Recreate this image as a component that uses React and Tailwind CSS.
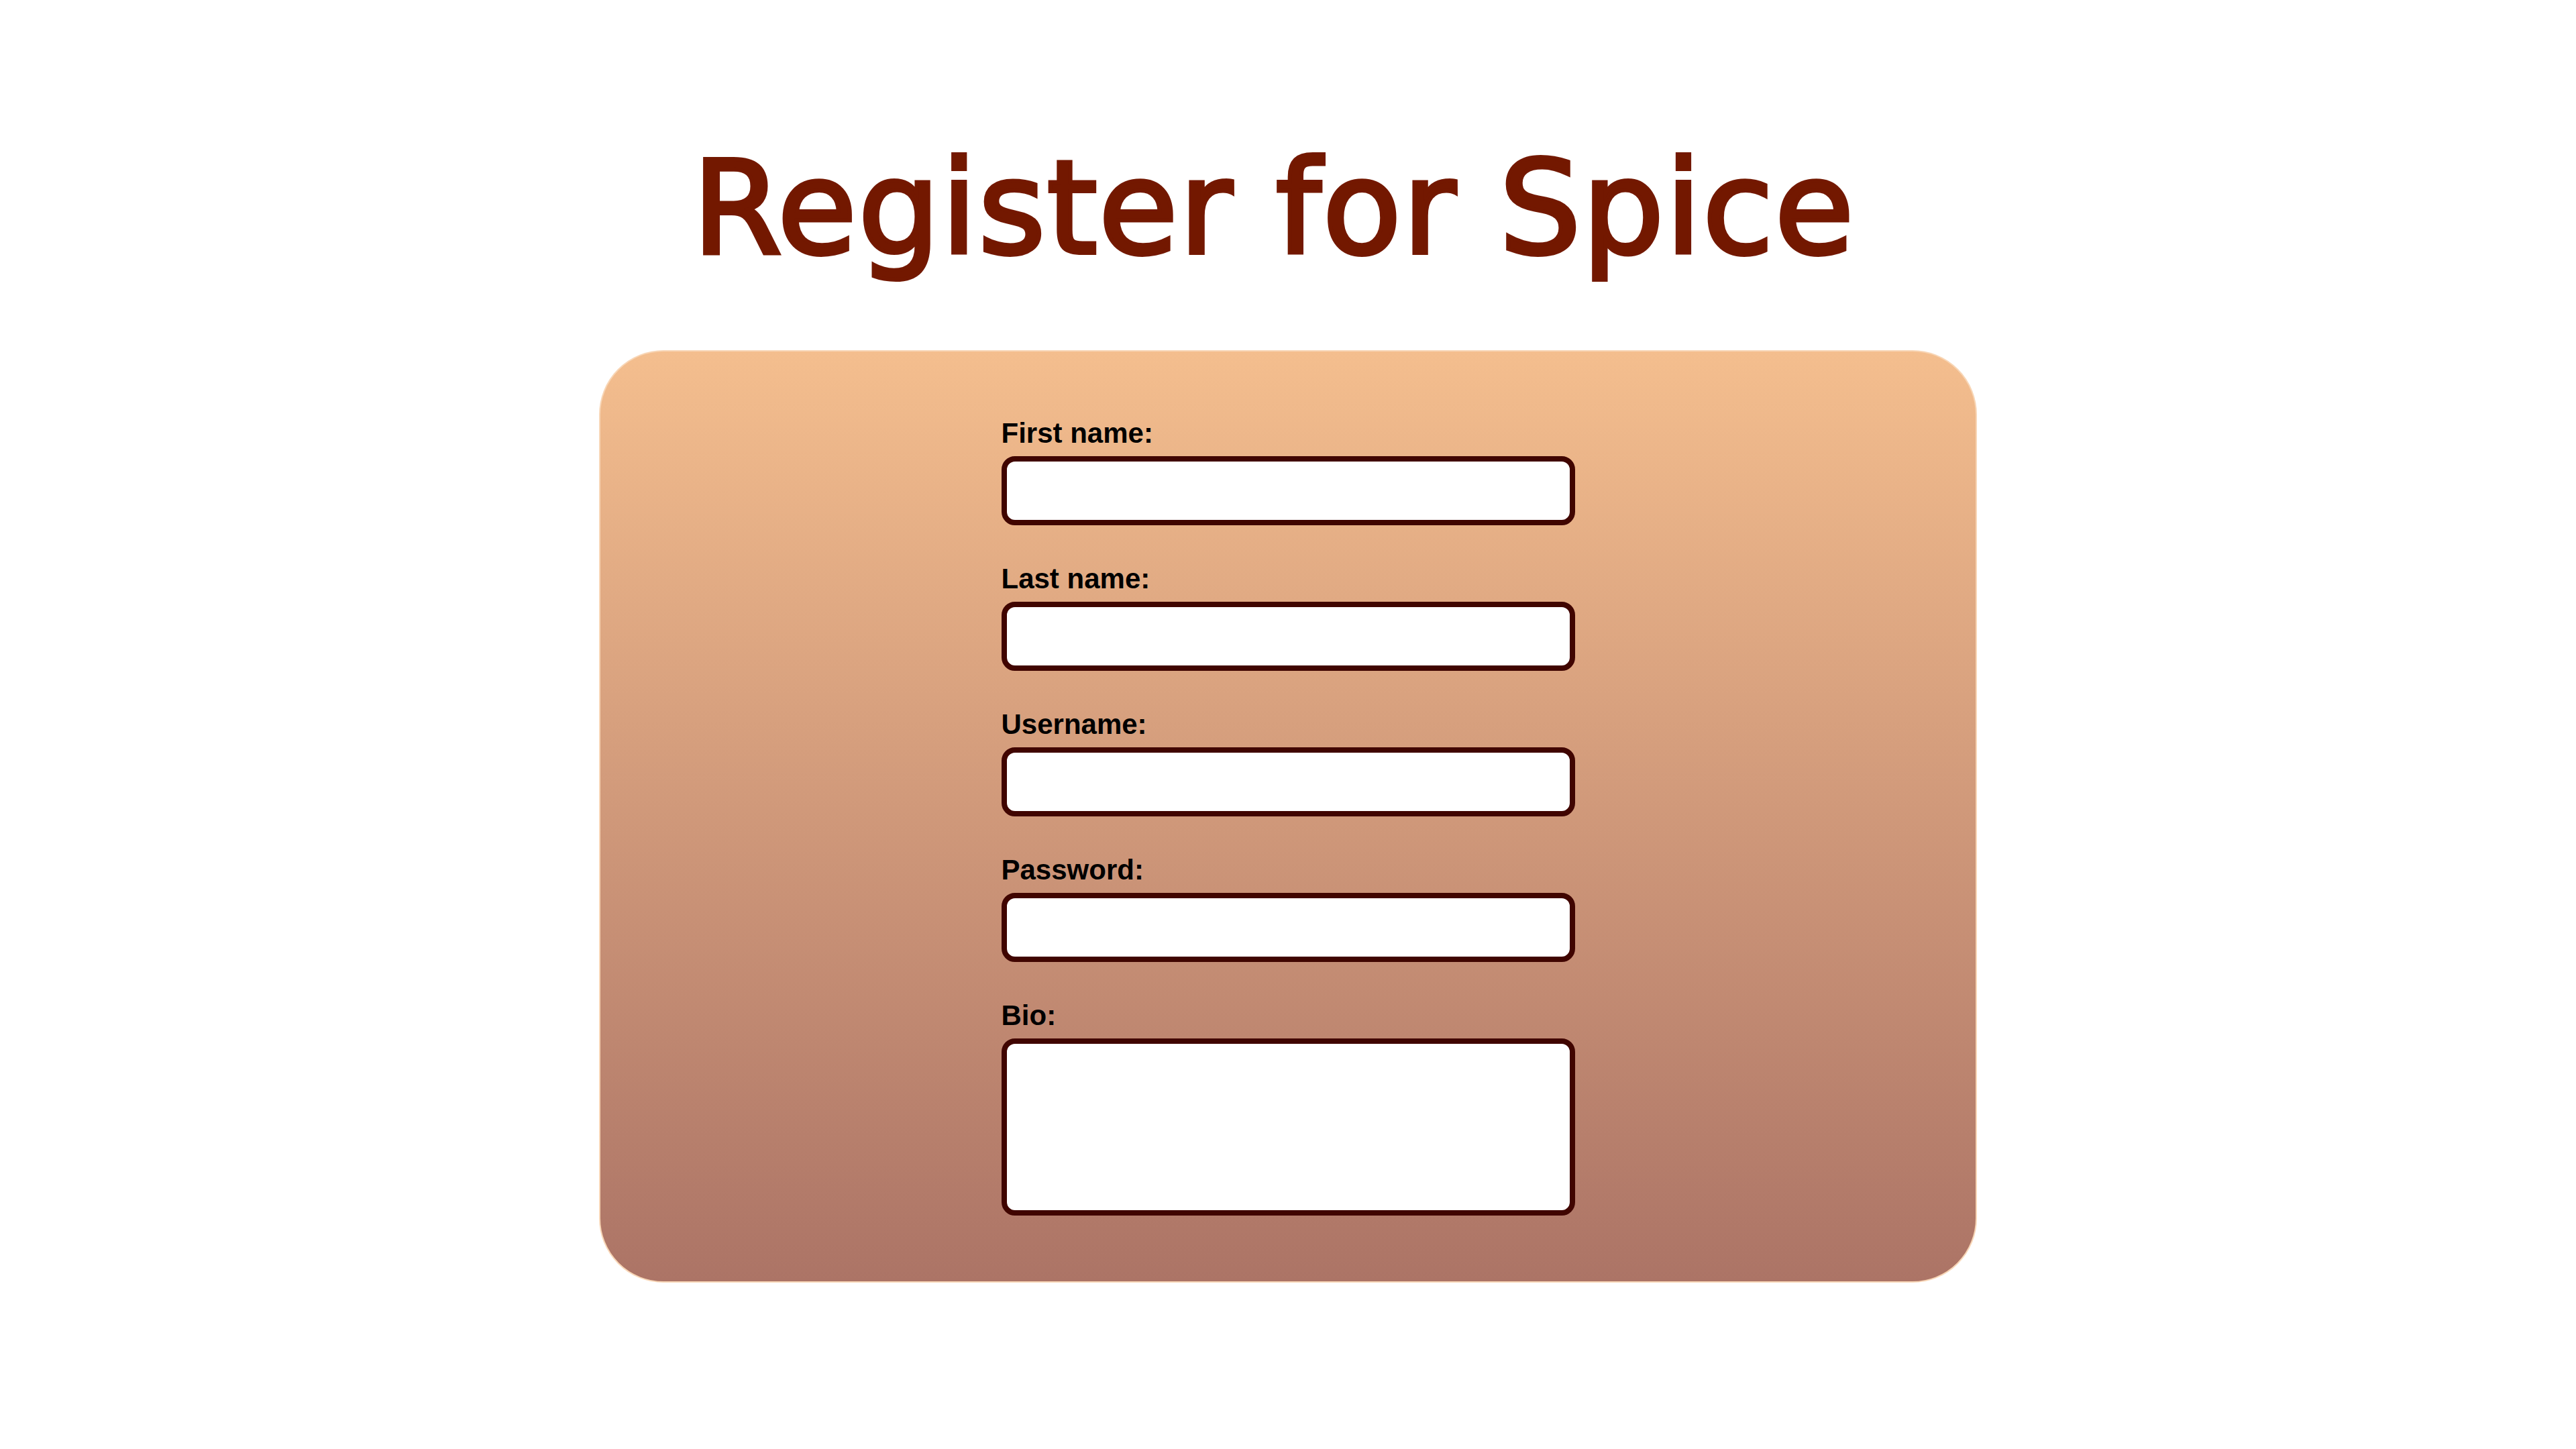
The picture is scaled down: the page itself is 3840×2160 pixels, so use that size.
const fields = [
  { id: 'first', label: 'First name:' },
  { id: 'last', label: 'Last name:' },
  { id: 'username', label: 'Username:' },
  { id: 'password', label: 'Password:', type: 'password' },
];

const App = () => {
  return (
    <div className="min-h-screen bg-white flex flex-col items-center">
      <h1 className="mt-[199px] mb-[99px] pr-[42px] text-[192px] leading-[224px] font-normal tracking-[2px] text-[#731800] [-webkit-text-stroke:6px_#731800] font-['DejaVu_Sans',sans-serif]">
        Register for Spice
      </h1>

      <form className="w-[2054px] rounded-[96px] border-2 border-[#f8d6b6] bg-gradient-to-b from-[#f4be8e] to-[#ac7466] pt-[98px] pb-[98px] flex flex-col items-center font-['Liberation_Sans',Arial,sans-serif]">
        <div className="w-[855px] flex flex-col">
          {fields.map((f) => (
            <div key={f.id} className="flex flex-col mb-[56px]">
              <label htmlFor={f.id} className="text-[42px] leading-[48px] font-bold text-black mb-[10px]">
                {f.label}
              </label>
              <input
                id={f.id}
                type={f.type || 'text'}
                className="h-[103px] bg-white border-[8px] border-[#400500] rounded-[20px] px-4 text-[40px] outline-none"
              />
            </div>
          ))}
          <div className="flex flex-col">
            <label htmlFor="bio" className="text-[42px] leading-[48px] font-bold text-black mb-[10px]">
              Bio:
            </label>
            <textarea
              id="bio"
              className="h-[264px] bg-white border-[8px] border-[#400500] rounded-[20px] px-4 text-[40px] outline-none resize-none"
            />
          </div>
        </div>
      </form>
    </div>
  );
};

export default App;
